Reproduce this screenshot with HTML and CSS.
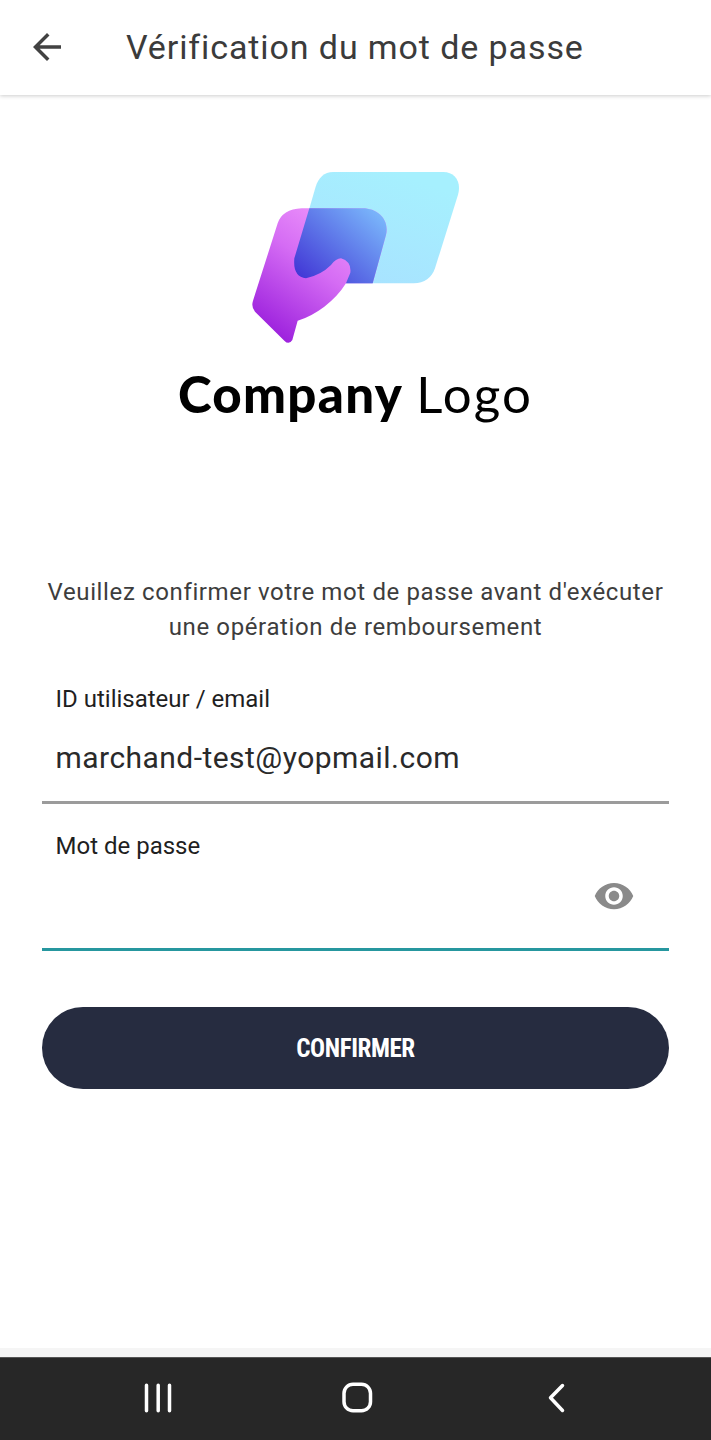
FILE: index.html
```html
<!DOCTYPE html>
<html lang="fr">
<head>
    <meta charset="UTF-8">
    <meta name="viewport" content="width=device-width, initial-scale=1.0">
    <title>Vérification du mot de passe</title>
    <link rel="stylesheet" href="styles.css">
</head>
<body>
    <div class="app">
        <header class="topbar">
            <svg class="back-icon" viewBox="0 0 24 24"><path d="M20 11H7.83l5.59-5.59L12 4l-8 8 8 8 1.41-1.41L7.83 13H20v-2z"/></svg>
            <h1>Vérification du mot de passe</h1>
        </header>

        <main class="content">
            <div class="logo">
                <svg class="logo-mark" viewBox="0 0 750 570">
                    <defs>
                        <linearGradient id="card" x1="0.8" y1="0.1" x2="0.3" y2="1">
                            <stop offset="0" stop-color="#a6f0fe"/>
                            <stop offset="1" stop-color="#a8e2ff"/>
                        </linearGradient>
                        <linearGradient id="hand" x1="0.85" y1="0.1" x2="0.2" y2="1">
                            <stop offset="0" stop-color="#f29cfc"/>
                            <stop offset="0.45" stop-color="#d56cf4"/>
                            <stop offset="1" stop-color="#9a1edc"/>
                        </linearGradient>
                        <linearGradient id="overlap" x1="0.95" y1="0.1" x2="0.05" y2="0.9">
                            <stop offset="0" stop-color="#7ab6fb"/>
                            <stop offset="1" stop-color="#4238d6"/>
                        </linearGradient>
                    </defs>
                    <path fill="url(#card)" d="M306 36H637C672 36 692 66 681 104L612 325C603 352 580 370 548 370H250L190 300L254 80C262 54 280 36 306 36Z"/>
                    <path fill="url(#hand)" d="M212 145H395C442 145 476 180 465 225L425 370H345Q320 410 280 440Q240 470 200 482L184 540Q174 556 160 542L72 455Q60 442 66 422L140 190Q154 148 212 145Z"/>
                    <path fill="url(#overlap)" d="M235 145H395C442 145 476 180 465 225L425 370H345L358 338Q362 305 330 295Q315 295 300 315Q270 345 225 355Q185 350 190 295Z"/>
                </svg>
                <div class="logo-text"><b>Company</b> <span>Logo</span></div>
            </div>

            <p class="intro">Veuillez confirmer votre mot de passe avant d'exécuter une opération de remboursement</p>

            <form class="form">
                <div class="field">
                    <label>ID utilisateur / email</label>
                    <div class="field-row">marchand-test@yopmail.com</div>
                </div>
                <div class="field field-active">
                    <label>Mot de passe</label>
                    <div class="field-row">
                        <svg class="eye-icon" viewBox="0 0 24 24"><path d="M12 4.5C7 4.5 2.73 7.61 1 12c1.73 4.39 6 7.5 11 7.5s9.27-3.11 11-7.5c-1.73-4.39-6-7.5-11-7.5zM12 17c-2.76 0-5-2.24-5-5s2.24-5 5-5 5 2.24 5 5-2.24 5-5 5zm0-8c-1.66 0-3 1.34-3 3s1.34 3 3 3 3-1.34 3-3-1.34-3-3-3z"/></svg>
                    </div>
                </div>
                <button type="button" class="confirm">CONFIRMER</button>
            </form>
        </main>

        <div class="nav-strip"></div>
        <nav class="navbar">
            <svg viewBox="0 0 40 40"><path d="M9.500 6.250V31.750M21.200 6.250V31.750M32.500 6.250V31.750"/></svg>
            <svg viewBox="0 0 40 40"><rect x="8" y="5.250" width="26.500" height="26.500" rx="9"/></svg>
            <svg viewBox="0 0 40 40"><path d="M27.500 6.500L15.500 18.800L27.500 31.500"/></svg>
        </nav>
    </div>
</body>
</html>
```

FILE: styles.css
```css
html, body {
    margin: 0;
    padding: 0;
}
body {
    font-family: Roboto, sans-serif;
    background-color: #fff;
}
.app {
    width: 711px;
    height: 1440px;
    display: flex;
    flex-direction: column;
    overflow: hidden;
}
.topbar {
    height: 93px;
    padding-bottom: 2px;
    flex: none;
    display: flex;
    align-items: center;
    background-color: #fff;
    box-shadow: 0 1px 4px rgba(0,0,0,0.2);
}
.back-icon {
    width: 42px;
    height: 42px;
    margin-left: 26px;
    margin-right: 58px;
    fill: #424242;
    flex: none;
}
.topbar h1 {
    margin: 0;
    font-size: 34px;
    font-weight: 400;
    color: #3b3b3b;
    letter-spacing: 0.9px;
}
.content {
    flex: 1;
    padding: 0 42px;
}
.logo {
    display: flex;
    flex-direction: column;
    align-items: center;
    padding-top: 65px;
}
.logo-mark {
    width: 250px;
    height: 190px;
    display: block;
}
.logo-text {
    font-family: Lato, sans-serif;
    font-size: 51px;
    font-weight: 400;
    line-height: 64px;
    color: #000;
    margin-top: 12px;
}
.logo-text b {
    font-weight: 900;
    letter-spacing: 1.3px;
}
.logo-text span {
    letter-spacing: 2.2px;
}
.intro {
    margin: 149px 0 0;
    font-size: 24px;
    line-height: 35px;
    text-align: center;
    color: #3d3d3d;
    letter-spacing: 0.63px;
}
.form {
    margin-top: 38px;
}
.field {
    border-bottom: 3px solid #9b9b9b;
    padding: 0 14px 0 13.5px;
    height: 118px;
    margin-bottom: 26px;
}
.field-active {
    border-bottom-color: #26979f;
}
.field label {
    display: block;
    font-size: 24px;
    line-height: 32px;
    color: #1f1f1f;
}
.field-row {
    height: 84px;
    display: flex;
    align-items: center;
    justify-content: flex-end;
}
.field:first-child .field-row {
    justify-content: flex-start;
    font-size: 30px;
    color: #2a2a2a;
    letter-spacing: 0.46px;
}
.eye-icon {
    width: 42px;
    height: 42px;
    fill: #8a8a8a;
    margin-right: 20px;
    margin-bottom: 16px;
}
.confirm {
    display: block;
    width: 100%;
    height: 82px;
    margin-top: 56px;
    border: none;
    border-radius: 41px;
    background-color: #262c40;
    color: #fff;
    font-family: Roboto, sans-serif;
    font-size: 25px;
    font-stretch: 75%;
    font-weight: 700;
    letter-spacing: -0.4px;
    cursor: pointer;
}
.nav-strip {
    height: 9px;
    flex: none;
    background-color: #f5f5f5;
}
.navbar {
    height: 83px;
    flex: none;
    display: flex;
    justify-content: center;
    align-items: center;
    gap: 159px;
    background-color: #272727;
    box-shadow: inset 0 1px 0 #555;
}
.navbar svg {
    width: 40px;
    height: 40px;
    fill: none;
    stroke: #fff;
    stroke-width: 3.5;
    stroke-linecap: round;
    stroke-linejoin: round;
}
```
